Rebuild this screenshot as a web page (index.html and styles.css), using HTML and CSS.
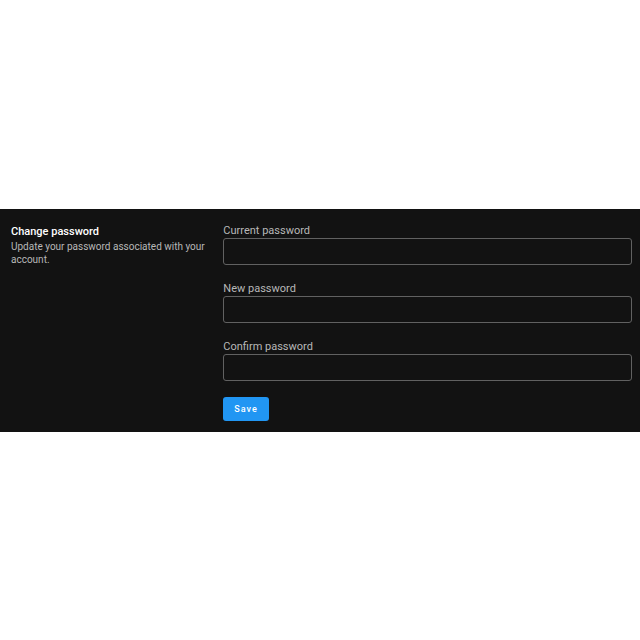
FILE: index.html
```html
<!DOCTYPE html>
<html lang="en">
<head>
<meta charset="utf-8">
<title>Change password</title>
<link rel="stylesheet" href="styles.css">
</head>
<body>
<main class="panel">
  <header class="intro">
    <h1 class="intro-title">Change password</h1>
    <p class="intro-text">Update your password associated with your account.</p>
  </header>
  <form class="form">
    <div class="fields">
      <div class="field">
        <label class="label" for="current">Current password</label>
        <input class="input" id="current" type="password">
      </div>
      <div class="field">
        <label class="label" for="new">New password</label>
        <input class="input" id="new" type="password">
      </div>
      <div class="field">
        <label class="label" for="confirm">Confirm password</label>
        <input class="input" id="confirm" type="password">
      </div>
    </div>
    <button class="save" type="button">Save</button>
  </form>
</main>
</body>
</html>
```
FILE: styles.css
```css
* {
  box-sizing: border-box;
}

body {
  margin: 0;
  min-height: 100vh;
  display: flex;
  flex-direction: column;
  justify-content: center;
  background: #fff;
  font-family: Roboto, "Liberation Sans", sans-serif;
}

.panel {
  display: grid;
  grid-template-columns: 1fr 2fr;
  gap: 8px;
  padding: 15px 8px 11px 11px;
  background: #121212;
}

.intro-title {
  margin: 0;
  font-size: 11px;
  line-height: 16px;
  font-weight: 500;
  color: #fff;
}

.intro-text {
  margin: 0;
  font-size: 10px;
  line-height: 13px;
  color: #b8b8b8;
}

.form {
  display: flex;
  flex-direction: column;
  align-items: flex-start;
  gap: 16px;
}

.fields {
  display: flex;
  flex-direction: column;
  gap: 17px;
  width: 100%;
}

.label {
  display: block;
  font-size: 11px;
  line-height: 14px;
  color: #b8b8b8;
}

.input {
  display: block;
  width: 100%;
  height: 27px;
  padding: 0 8px;
  border: 1px solid #616161;
  border-radius: 3px;
  background: transparent;
  color: #fff;
  font: inherit;
  font-size: 11px;
}

.save {
  height: 24px;
  padding: 0 11px;
  border: 0;
  border-radius: 3px;
  background: #2196f3;
  color: #fff;
  font: inherit;
  font-size: 9px;
  font-weight: 500;
  letter-spacing: 1px;
}
```
